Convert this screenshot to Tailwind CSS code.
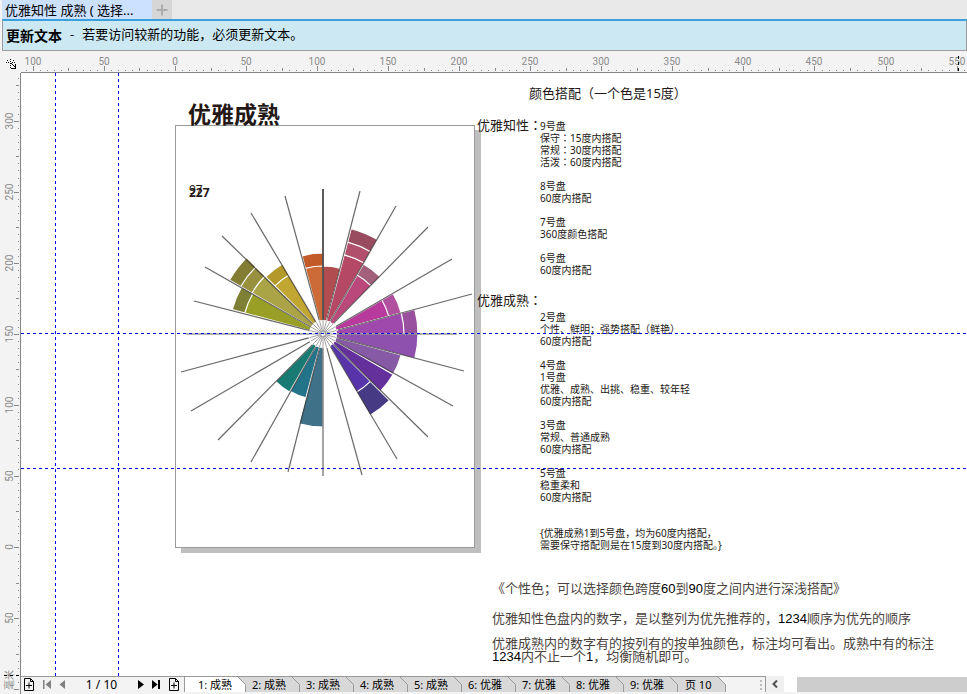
<!DOCTYPE html>
<html lang="zh-CN">
<head>
<meta charset="utf-8">
<title>优雅知性 成熟</title>
<script src="https://cdn.jsdelivr.net/npm/@tailwindcss/browser@4"></script>
</head>
<body class="flex h-screen flex-col overflow-hidden bg-[#f3f3f3] pl-[2px] font-['Noto_Sans','Noto_Sans_CJK_SC',sans-serif] text-[13px] text-black">

<header class="flex h-[19px] shrink-0 bg-[#e9e9e9]">
  <button class="w-[150px] bg-[#cce0ff] pl-[3px] text-left leading-[18px] whitespace-nowrap">优雅知性 成熟 ( 选择...</button>
  <button aria-label="新建文档" class="flex w-5 items-center justify-center bg-[#d6d6d6]">
    <svg width="12" height="12" viewBox="0 0 12 12"><path d="M6 0.500V11.500M0.500 6H11.500" stroke="#acacac" stroke-width="2"/></svg>
  </button>
</header>

<section class="flex h-8 shrink-0 items-center border border-t-2 border-[#9b9ba0] border-t-[#3ba0dc] bg-[#cbe8f3] pb-px pl-[3px] whitespace-nowrap">
  <strong class="text-[14px]">更新文本</strong>
  <span class="px-2">-</span>
  <span>若要访问较新的功能，必须更新文本。</span>
</section>

<div class="grid min-h-0 flex-1 grid-cols-[19px_minmax(0,1fr)] grid-rows-[22px_minmax(0,1fr)_18px]">
  <div class="flex items-center justify-center pt-1">
    <svg width="11" height="11" viewBox="0 0 11 11" shape-rendering="crispEdges" fill="#000">
      <path d="M4 0h1v1h-1zM4 2h1v1h-1zM4 4h1v1h-1zM4 6h1v1h-1zM4 8h1v1h-1zM0 3h1v1h-1zM2 3h1v1h-1zM6 3h1v1h-1zM8 3h1v1h-1zM5 4h1v1h-1zM6 5h1v1h-1zM7 6h1v1h-1zM8 7h1v1h-1zM9 5h1v5h-1zM5 9h5v1h-5zM1 1h1v1h-1zM7 1h1v1h-1z"/>
    </svg>
  </div>
  <div class="min-w-0 overflow-hidden border-b border-[#858585]">
    <svg id="hruler" class="h-full w-full font-['Roboto',sans-serif] text-[10px]" fill="#8a8a8a" shape-rendering="crispEdges"></svg>
  </div>
  <div class="row-span-2 overflow-hidden border-r border-[#858585]">
    <svg id="vruler" class="h-full w-full font-['Roboto','Noto_Sans_CJK_SC',sans-serif] text-[10px]" fill="#8a8a8a" shape-rendering="crispEdges"></svg>
  </div>

  <main class="relative overflow-hidden bg-white text-[#231815]">
    <div class="absolute top-[52px] left-[154px] h-[423px] w-[300px] border border-[#9a9a9a] bg-white shadow-[6px_5px_0_#bfbfbf]"></div>
    <h1 class="absolute top-[25px] left-[167px] text-[23px] leading-[32px] font-bold">优雅成熟</h1>
    <span class="absolute top-[109px] left-[168px] text-[12px] leading-[16px]">97</span>
    <span class="absolute top-[112px] left-[168px] text-[12px] leading-[16px] font-bold">227</span>

    <svg id="wheel" class="absolute top-[111px] left-[152px]" width="300" height="300" viewBox="-150 -150 300 300"></svg>

    <h2 class="absolute top-[10px] left-[508px] leading-5">颜色搭配（一个色是15度）</h2>
    <h2 class="absolute top-[42px] left-[456px] leading-5">优雅知性<span lang="ja" class="font-['Noto_Sans_CJK_JP']">：</span></h2>
    <p class="absolute top-[47px] left-[519px] text-[10px] leading-[12px] whitespace-nowrap">9号盘<br>保守<span lang="ja" class="font-['Noto_Sans_CJK_JP']">：</span>15度内搭配<br>常规<span lang="ja" class="font-['Noto_Sans_CJK_JP']">：</span>30度内搭配<br>活泼<span lang="ja" class="font-['Noto_Sans_CJK_JP']">：</span>60度内搭配<br><br>8号盘<br>60度内搭配<br><br>7号盘<br>360度颜色搭配<br><br>6号盘<br>60度内搭配</p>
    <h2 class="absolute top-[217px] left-[456px] leading-5">优雅成熟<span lang="ja" class="font-['Noto_Sans_CJK_JP']">：</span></h2>
    <p class="absolute top-[238px] left-[519px] text-[10px] leading-[12px] whitespace-nowrap">2号盘<br>个性、鲜明；强势搭配（鲜艳）<br>60度内搭配<br><br>4号盘<br>1号盘<br>优雅、成熟、出挑、稳重、较年轻<br>60度内搭配<br><br>3号盘<br>常规、普通成熟<br>60度内搭配<br><br>5号盘<br>稳重柔和<br>60度内搭配<br><br><br>{优雅成熟1到5号盘，均为60度内搭配，<br>需要保守搭配则是在15度到30度内搭配。}</p>

    <div class="absolute top-[509px] left-[471px] font-['Liberation_Sans','Noto_Sans_CJK_SC',sans-serif] text-[13px] leading-[13px] whitespace-nowrap text-[#4a4340]">
      <p>《个性色；可以选择颜色跨度<span class="text-black">60</span>到<span class="text-black">90</span>度之间内进行深浅搭配》</p>
      <p class="pt-[17px]">优雅知性色盘内的数字，是以整列为优先推荐的，<span class="text-black">1234</span>顺序为优先的顺序</p>
      <p class="pt-[12px]">优雅成熟内的数字有的按列有的按单独颜色，标注均可看出。成熟中有的标注<br><span class="text-black">1234</span>内不止一个<span class="text-black">1</span>，均衡随机即可。</p>
    </div>

    <svg class="absolute inset-0 h-full w-full" stroke="#0000f0" stroke-dasharray="3 3" shape-rendering="crispEdges">
      <path d="M34.500 0V4000M97.500 0V4000M0 260.500H4000M0 395.500H4000"/>
    </svg>
  </main>

  <footer class="flex pb-[2px]">
    <nav class="flex w-[745px] border-t border-r border-[#999] text-[12px]">
      <div class="flex w-[163px] items-center justify-between pr-[5px] pl-[3px]">
        <button aria-label="在前面添加页"><svg width="10" height="13" viewBox="0 0 10 13" fill="none" stroke="#000"><path d="M0.500 0.500H6.500L9.500 3.500V12.500H0.500ZM6.500 0.500V3.500H9.500M5 4.500V10.500M2 7.500H8"/></svg></button>
        <button aria-label="第一页"><svg width="8" height="9" viewBox="0 0 8 9" fill="#808080"><path d="M0 0H1.500V9H0ZM8 0V9L2.500 4.500Z"/></svg></button>
        <button aria-label="上一页"><svg width="6" height="9" viewBox="0 0 6 9" fill="#808080"><path d="M6 0V9L0.500 4.500Z"/></svg></button>
        <span class="px-3 leading-4">1 / 10</span>
        <button aria-label="下一页"><svg width="6" height="9" viewBox="0 0 6 9"><path d="M0 0V9L6 4.500Z"/></svg></button>
        <button aria-label="最后一页"><svg width="8" height="9" viewBox="0 0 8 9"><path d="M0 0V9L5.500 4.500ZM6 0H8V9H6Z"/></svg></button>
        <button aria-label="在后面添加页"><svg width="10" height="13" viewBox="0 0 10 13" fill="none" stroke="#000"><path d="M0.500 0.500H6.500L9.500 3.500V12.500H0.500ZM6.500 0.500V3.500H9.500M5 4.500V10.500M2 7.500H8"/></svg></button>
      </div>
      <div id="tabs" class="flex text-[11px] leading-[15px] whitespace-nowrap"></div>
      <div class="ml-auto flex flex-col justify-center gap-[2px] pr-[3px]">
        <i class="size-[2px] bg-[#bbb]"></i><i class="size-[2px] bg-[#bbb]"></i><i class="size-[2px] bg-[#bbb]"></i>
      </div>
    </nav>
    <button aria-label="向左滚动" class="flex w-[18px] items-center justify-center bg-[#f0f0f0]"><svg width="6" height="8" viewBox="0 0 6 8"><path d="M5 0.500L1.500 4L5 7.500" fill="none" stroke="#505050" stroke-width="2"/></svg></button>
    <div class="flex flex-1 bg-white pt-px pl-[13px]"><div class="flex-1 bg-[#cdcdcd]"></div></div>
  </footer>
</div>

<script>
const STEP = 71.05 / 10;

// Horizontal ruler, zero mark at 154px
let h = '';
for (let i = -21; i < 200; i++) {
  const x = Math.round(154 + i * STEP);
  const len = i % 10 === 0 ? 5 : i % 5 === 0 ? 3 : 1;
  h += `<rect x="${x}" y="${20 - len}" width="1" height="${len}"/>`;
  if (i % 10 === 0 && i >= -20 && x < innerWidth - 21) h += `<text x="${x}" y="14" text-anchor="middle">${Math.abs(i * 5)}</text>`;
}
h += '<path d="M937.500 5V20" stroke="#000" stroke-dasharray="3 3"/>';
document.getElementById('hruler').innerHTML = h;

// Vertical ruler, zero mark at 474px
let v = '';
for (let i = -100; i < 67; i++) {
  const y = Math.round(474 - i * STEP);
  const len = i % 10 === 0 ? 5 : i % 5 === 0 ? 3 : 1;
  v += `<rect x="${17 - len}" y="${y}" width="${len}" height="1"/>`;
  if (i % 10 === 0 && i > -20) v += `<text transform="translate(11 ${y}) rotate(-90)" text-anchor="middle">${Math.abs(i * 5)}</text>`;
}
v += '<text transform="translate(11 607) rotate(-90)" text-anchor="middle">毫米</text>';
v += '<path d="M2 602.500H18" stroke="#000" stroke-dasharray="3 3"/>';
document.getElementById('vruler').innerHTML = v;

// Colour wheel: [start angle, [outer radius, colour]...], clockwise from the top
const sectors = [
  [-15, [81, '#c25a28'], [68, '#cc6b38']],
  [0, [68, '#b14c50']],
  [15, [109, '#994c60'], [95, '#b0506c'], [82, '#b54865']],
  [30, [81, '#a2607b'], [68, '#ba487a']],
  [60, [81, '#b0509f'], [68, '#b83a9c']],
  [75, [95, '#98509f'], [81, '#a049ac']],
  [90, [95, '#8e52ae']],
  [105, [81, '#865aa5']],
  [120, [81, '#64309c']],
  [135, [94, '#473a85'], [67, '#5834aa']],
  [180, [93, '#3f7188']],
  [195, [66, '#237488']],
  [210, [67, '#187a72']],
  [285, [94, '#7d8035'], [81, '#989f24']],
  [300, [108, '#837d33'], [95, '#98903f'], [82, '#aaa446']],
  [315, [81, '#b29929'], [68, '#c1a631']]
];
const at = (r, a) => [r * Math.sin(a * Math.PI / 180), -r * Math.cos(a * Math.PI / 180)].map(n => n.toFixed(1)).join(' ');
let w = '';
for (const [a, ...bands] of sectors)
  for (const [r, c] of bands)
    w += `<path d="M0 0L${at(r, a)}A${r} ${r} 0 0 1 ${at(r, a + 15)}Z" fill="${c}" stroke="#fff" stroke-width="1.200"/>`;
const ends = [[0,-145],[37,-143],[73,-128],[105,-107],[129,-75],[149,-40],[134,0],[141,37],[130,72],[105,103],[74,125],[39,141],[0,142],[-35,138],[-72,128],[-105,106],[-132,77],[-142,38],[-137,0],[-129,-33],[-118,-67],[-101,-98],[-72,-121],[-38,-138]];
for (const [x, y] of ends)
  w += `<path d="M${x * 0.1} ${y * 0.1}L${x} ${y}" stroke="#383434" stroke-opacity=".75" stroke-width="1.200"/>`;
w += '<path d="M0 -145V-14" stroke="#383434" stroke-width="1.300"/><circle r="14" fill="#fff"/>';
for (let a = 0; a < 360; a += 15)
  w += `<path d="M${at(2, a)}L${at(14, a)}" stroke="#8f8b8b" stroke-width=".8"/>`;
document.getElementById('wheel').innerHTML = w;

// Page tabs
const names = ['1: 成熟', '2: 成熟', '3: 成熟', '4: 成熟', '5: 成熟', '6: 优雅', '7: 优雅', '8: 优雅', '9: 优雅', '页 10'];
document.getElementById('tabs').innerHTML = names.map((n, i) => {
  const first = i === 0, last = i === names.length - 1;
  const box = first ? 'w-[62px] bg-white pl-[13px] border-l border-[#999]' : last ? 'w-[48px] bg-[#d8d8d8] pl-[7px]' : 'w-[54px] bg-[#d8d8d8] pl-[6px]';
  return `<button class="flex justify-between ${box}"><span>${n}</span><svg class="-ml-2 shrink-0" width="8" height="15" viewBox="0 0 8 15"><path d="M0 0H8V8Z" fill="${last ? '#f3f3f3' : '#d8d8d8'}"/><path d="M0 0L7.500 7.500V15" fill="none" stroke="#999"/></svg></button>`;
}).join('');
</script>
</body>
</html>
